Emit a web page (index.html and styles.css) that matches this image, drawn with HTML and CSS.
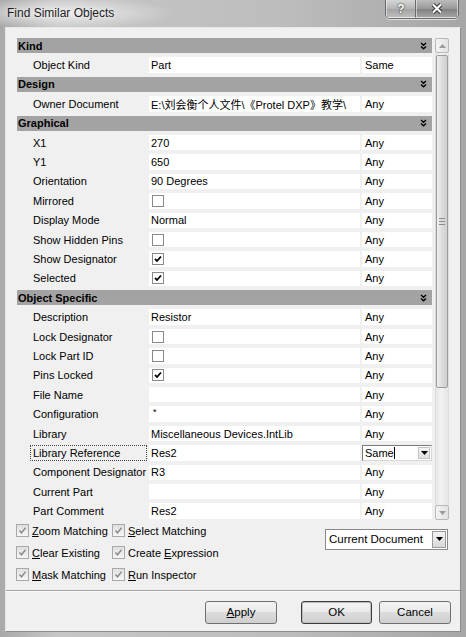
FILE: index.html
```html
<!DOCTYPE html>
<html lang="en">
<head>
    <meta charset="UTF-8">
    <title>Find Similar Objects</title>
    <link rel="stylesheet" href="styles.css">
</head>
<body>

    <div class="window">
        <div class="titlebar">
            <span class="title">Find Similar Objects</span>
            <div class="caption-buttons">
                <span class="cap-btn help">?</span>
                <span class="cap-btn close">
                    <svg width="14" height="11" viewBox="0 0 14 11">
                        <path d="M3 1.5 L11 9.5 M11 1.5 L3 9.5" stroke="#3a3a3a" stroke-width="4" fill="none"/>
                        <path d="M3 1.5 L11 9.5 M11 1.5 L3 9.5" stroke="#fff" stroke-width="2" fill="none"/>
                    </svg>
                </span>
            </div>
        </div>

        <div class="client">
            <div class="grid-area">
                <div class="grid">
                    <div class="group"><span>Kind</span><svg class="chev" width="7" height="8" viewBox="0 0 7 8"><path d="M1 1 L3.5 3.3 L6 1 M1 4.5 L3.5 6.8 L6 4.5" stroke="#000" stroke-width="1.4" fill="none"/></svg></div>
                    <div class="row"><span class="label">Object Kind</span><span class="value">Part</span><span class="match">Same</span></div>

                    <div class="group"><span>Design</span><svg class="chev" width="7" height="8" viewBox="0 0 7 8"><path d="M1 1 L3.5 3.3 L6 1 M1 4.5 L3.5 6.8 L6 4.5" stroke="#000" stroke-width="1.4" fill="none"/></svg></div>
                    <div class="row"><span class="label">Owner Document</span><span class="value">E:\刘会衡个人文件\《Protel DXP》教学\</span><span class="match">Any</span></div>

                    <div class="group"><span>Graphical</span><svg class="chev" width="7" height="8" viewBox="0 0 7 8"><path d="M1 1 L3.5 3.3 L6 1 M1 4.5 L3.5 6.8 L6 4.5" stroke="#000" stroke-width="1.4" fill="none"/></svg></div>
                    <div class="row"><span class="label">X1</span><span class="value">270</span><span class="match">Any</span></div>
                    <div class="row"><span class="label">Y1</span><span class="value">650</span><span class="match">Any</span></div>
                    <div class="row"><span class="label">Orientation</span><span class="value">90 Degrees</span><span class="match">Any</span></div>
                    <div class="row"><span class="label">Mirrored</span><span class="value"><span class="box"></span></span><span class="match">Any</span></div>
                    <div class="row"><span class="label">Display Mode</span><span class="value">Normal</span><span class="match">Any</span></div>
                    <div class="row"><span class="label">Show Hidden Pins</span><span class="value"><span class="box"></span></span><span class="match">Any</span></div>
                    <div class="row"><span class="label">Show Designator</span><span class="value"><span class="box"><svg width="10" height="10" viewBox="0 0 10 10"><path d="M2 4.8 L4 7 L8 2.5" stroke="#000" stroke-width="1.8" fill="none"/></svg></span></span><span class="match">Any</span></div>
                    <div class="row"><span class="label">Selected</span><span class="value"><span class="box"><svg width="10" height="10" viewBox="0 0 10 10"><path d="M2 4.8 L4 7 L8 2.5" stroke="#000" stroke-width="1.8" fill="none"/></svg></span></span><span class="match">Any</span></div>

                    <div class="group"><span>Object Specific</span><svg class="chev" width="7" height="8" viewBox="0 0 7 8"><path d="M1 1 L3.5 3.3 L6 1 M1 4.5 L3.5 6.8 L6 4.5" stroke="#000" stroke-width="1.4" fill="none"/></svg></div>
                    <div class="row"><span class="label">Description</span><span class="value">Resistor</span><span class="match">Any</span></div>
                    <div class="row"><span class="label">Lock Designator</span><span class="value"><span class="box"></span></span><span class="match">Any</span></div>
                    <div class="row"><span class="label">Lock Part ID</span><span class="value"><span class="box"></span></span><span class="match">Any</span></div>
                    <div class="row"><span class="label">Pins Locked</span><span class="value"><span class="box"><svg width="10" height="10" viewBox="0 0 10 10"><path d="M2 4.8 L4 7 L8 2.5" stroke="#000" stroke-width="1.8" fill="none"/></svg></span></span><span class="match">Any</span></div>
                    <div class="row"><span class="label">File Name</span><span class="value"></span><span class="match">Any</span></div>
                    <div class="row"><span class="label">Configuration</span><span class="value star">*</span><span class="match">Any</span></div>
                    <div class="row"><span class="label">Library</span><span class="value">Miscellaneous Devices.IntLib</span><span class="match">Any</span></div>
                    <div class="row"><span class="label focused">Library Reference</span><span class="value">Res2</span><span class="match combo">Same<span class="caret"></span><span class="drop"><svg width="7" height="4" viewBox="0 0 7 4"><path d="M0 0 H7 L3.5 4 Z" fill="#000"/></svg></span></span></div>
                    <div class="row"><span class="label">Component Designator</span><span class="value">R3</span><span class="match">Any</span></div>
                    <div class="row"><span class="label">Current Part</span><span class="value"></span><span class="match">Any</span></div>
                    <div class="row"><span class="label">Part Comment</span><span class="value">Res2</span><span class="match">Any</span></div>
                </div>

                <div class="scrollbar">
                    <div class="sb-btn"><svg width="7" height="4" viewBox="0 0 7 4"><path d="M0 4 H7 L3.5 0 Z" fill="#9a9a9a"/></svg></div>
                    <div class="sb-track">
                        <div class="sb-thumb"><span class="grip"></span></div>
                    </div>
                    <div class="sb-btn"><svg width="7" height="4" viewBox="0 0 7 4"><path d="M0 0 H7 L3.5 4 Z" fill="#9a9a9a"/></svg></div>
                </div>
            </div>

            <div class="options">
                <div class="checks">
                    <label class="opt"><span class="obox"><svg width="9" height="9" viewBox="0 0 9 9"><path d="M1.5 4.5 L3.5 6.8 L7.5 1.8" stroke="#8a8a8a" stroke-width="1.4" fill="none"/></svg></span><span><u>Z</u>oom Matching</span></label>
                    <label class="opt"><span class="obox"><svg width="9" height="9" viewBox="0 0 9 9"><path d="M1.5 4.5 L3.5 6.8 L7.5 1.8" stroke="#8a8a8a" stroke-width="1.4" fill="none"/></svg></span><span><u>S</u>elect Matching</span></label>
                    <label class="opt"><span class="obox"><svg width="9" height="9" viewBox="0 0 9 9"><path d="M1.5 4.5 L3.5 6.8 L7.5 1.8" stroke="#8a8a8a" stroke-width="1.4" fill="none"/></svg></span><span><u>C</u>lear Existing</span></label>
                    <label class="opt"><span class="obox"><svg width="9" height="9" viewBox="0 0 9 9"><path d="M1.5 4.5 L3.5 6.8 L7.5 1.8" stroke="#8a8a8a" stroke-width="1.4" fill="none"/></svg></span><span>Create <u>E</u>xpression</span></label>
                    <label class="opt"><span class="obox"><svg width="9" height="9" viewBox="0 0 9 9"><path d="M1.5 4.5 L3.5 6.8 L7.5 1.8" stroke="#8a8a8a" stroke-width="1.4" fill="none"/></svg></span><span><u>M</u>ask Matching</span></label>
                    <label class="opt"><span class="obox"><svg width="9" height="9" viewBox="0 0 9 9"><path d="M1.5 4.5 L3.5 6.8 L7.5 1.8" stroke="#8a8a8a" stroke-width="1.4" fill="none"/></svg></span><span><u>R</u>un Inspector</span></label>
                </div>
                <div class="scope">
                    <span>Current Document</span>
                    <span class="scope-drop"><svg width="7" height="4" viewBox="0 0 7 4"><path d="M0 0 H7 L3.5 4 Z" fill="#000"/></svg></span>
                </div>
            </div>

            <div class="footer">
                <button class="btn apply"><u>A</u>pply</button>
                <button class="btn ok">OK</button>
                <button class="btn">Cancel</button>
            </div>
        </div>
    </div>

</body>
</html>
```

FILE: styles.css
```css
* {
    box-sizing: border-box;
}
body {
    margin: 0;
    width: 466px;
    height: 637px;
    overflow: hidden;
    font-family: "Liberation Sans", Arial, "Noto Sans CJK SC", sans-serif;
    font-size: 11px;
    color: #000;
    background: linear-gradient(to right, #a9a9a9, #c6c6c6 12%, #bdbdbd 60%, #a6a6a6);
}
.window {
    height: 637px;
    display: flex;
    flex-direction: column;
}
.titlebar {
    height: 27px;
    display: flex;
    justify-content: space-between;
    align-items: flex-start;
    padding: 0 7px;
    background: radial-gradient(ellipse 110px 16px at 65px 13px, rgba(240,240,240,0.9), rgba(240,240,240,0));
}
.title {
    margin-top: 6px;
    font-size: 12px;
    color: #1e1e1e;
    text-shadow: 0 0 5px #f4f4f4;
}
.caption-buttons {
    display: flex;
    height: 19px;
    border: 1px solid #6a6a6a;
    border-top: none;
    border-radius: 0 0 5px 5px;
    overflow: hidden;
    box-shadow: 0 1px 0 rgba(255,255,255,0.6);
}
.cap-btn {
    display: flex;
    align-items: center;
    justify-content: center;
    height: 18px;
    border: 1px solid rgba(255,255,255,0.5);
    border-top: none;
}
.help {
    width: 30px;
    background: linear-gradient(#d6d6d6, #b4b4b4 50%, #a2a2a2 51%, #bcbcbc);
    font-weight: bold;
    font-size: 12px;
    color: #fff;
    text-shadow: 0 0 1px #333, 0 0 2px #333;
    border-right: 1px solid #6a6a6a;
}
.close {
    width: 42px;
    background: linear-gradient(#bcbcbc, #9a9a9a 50%, #7e7e7e 51%, #a4a4a4);
}
.client {
    height: 605px;
    margin: 0 5px;
    background-color: #f0f0f0;
    border: 1px solid #8c8c8c;
    border-top-color: #e8e8e8;
    border-left-color: #e4e4e4;
}
.grid-area {
    display: flex;
    gap: 3px;
    padding: 8px 11px 0 11px;
}
.grid {
    width: 415px;
}
.group {
    display: flex;
    justify-content: space-between;
    align-items: center;
    height: 15.4px;
    margin: 2px 0;
    padding: 0 5px 0 1px;
    background-color: #a3a3a3;
    font-weight: bold;
    font-size: 11px;
}
.chev {
    display: block;
}
.row {
    display: grid;
    grid-template-columns: 130px 211px 70px;
    column-gap: 2px;
    height: 19.4px;
    padding: 2px 0 2px;
}
.row > span {
    display: flex;
    align-items: center;
    height: 15.4px;
    white-space: nowrap;
    overflow: hidden;
}
.label {
    padding-left: 16px;
}
.label.focused {
    margin-left: 13px;
    padding-left: 2px;
    border: 1px dotted #444;
}
.value {
    background-color: #fff;
    padding-left: 2px;
}
.value.star {
    align-items: flex-start;
    font-size: 9px;
    padding-top: 1px;
    padding-left: 4px;
}
.match {
    background-color: #fff;
    padding-left: 3px;
}
.box {
    display: flex;
    align-items: center;
    justify-content: center;
    width: 12px;
    height: 12px;
    margin-left: 1px;
    border: 1px solid #8a8a8a;
    background-color: #fff;
}
.match.combo {
    position: relative;
    border: 1px solid #7b7b7b;
    border-right-color: #d8d8d8;
    border-bottom-color: #d8d8d8;
    padding-left: 2px;
}
.caret {
    display: inline-block;
    width: 1px;
    height: 12px;
    background-color: #000;
}
.drop {
    position: absolute;
    right: 1px;
    top: 1px;
    width: 12px;
    height: 12px;
    display: flex;
    align-items: center;
    justify-content: center;
    background: linear-gradient(#f6f6f6, #dedede);
    border: 1px solid #c4c4c4;
}
.scrollbar {
    width: 14px;
    height: 482px;
    margin-top: 2px;
    display: flex;
    flex-direction: column;
}
.sb-btn {
    height: 15px;
    display: flex;
    align-items: center;
    justify-content: center;
    background: linear-gradient(to right, #f4f4f4, #e2e2e2);
    border: 1px solid #b8b8b8;
    border-radius: 2px;
}
.sb-track {
    flex: 1;
    padding-top: 2px;
    background: linear-gradient(to right, #e6e6e6, #f2f2f2 40%, #e6e6e6);
    border-left: 1px solid #dcdcdc;
    border-right: 1px solid #dcdcdc;
}
.sb-thumb {
    height: 333px;
    display: flex;
    align-items: center;
    justify-content: center;
    background: linear-gradient(to right, #f0f0f0, #dcdcdc 50%, #cfcfcf);
    border: 1px solid #9c9c9c;
    border-radius: 2px;
}
.grip {
    width: 6px;
    height: 7px;
    border-top: 1px solid #8a8a8a;
    border-bottom: 1px solid #8a8a8a;
    background: linear-gradient(transparent 2px, #8a8a8a 2px, #8a8a8a 3px, transparent 3px);
}
.options {
    display: flex;
    justify-content: space-between;
    align-items: flex-start;
    height: 66px;
    margin: -1px 0 4px;
    padding: 0 12px 0 10px;
}
.checks {
    display: grid;
    grid-template-columns: 96px auto;
    grid-auto-rows: 22px;
}
.opt {
    display: flex;
    align-items: center;
    gap: 3px;
    white-space: nowrap;
}
.obox {
    display: flex;
    align-items: center;
    justify-content: center;
    width: 13px;
    height: 13px;
    border: 1px solid #a8a8a8;
    background: linear-gradient(#e0e0e0, #f6f6f6);
}
.scope {
    display: flex;
    align-items: center;
    justify-content: space-between;
    width: 123px;
    height: 21px;
    margin-top: 9px;
    padding: 0 1px 0 3px;
    background-color: #fff;
    border: 1px solid #8a8a8a;
    font-size: 11.5px;
}
.scope-drop {
    width: 14px;
    height: 17px;
    display: flex;
    align-items: center;
    justify-content: center;
    background: linear-gradient(#f4f4f4, #d8d8d8);
    border: 1px solid #9a9a9a;
}
.footer {
    display: flex;
    justify-content: flex-end;
    height: 40px;
    padding: 10px 9px 0 0;
    border-top: 1px solid #a2a2a2;
    box-shadow: inset 0 1px 0 #fafafa;
}
.btn {
    width: 72px;
    height: 23px;
    margin-left: 7px;
    font-family: "Liberation Sans", Arial, sans-serif;
    font-size: 11.5px;
    color: #000;
    background: linear-gradient(#f3f3f3, #ebebeb 45%, #dcdcdc 50%, #cfcfcf);
    border: 1px solid #707070;
    border-radius: 3px;
}
.btn.apply {
    margin-right: 17px;
}
.btn.ok {
    width: 71px;
    border-color: #3c3c3c;
    box-shadow: inset 0 0 0 1px #bdbdbd;
}
```
